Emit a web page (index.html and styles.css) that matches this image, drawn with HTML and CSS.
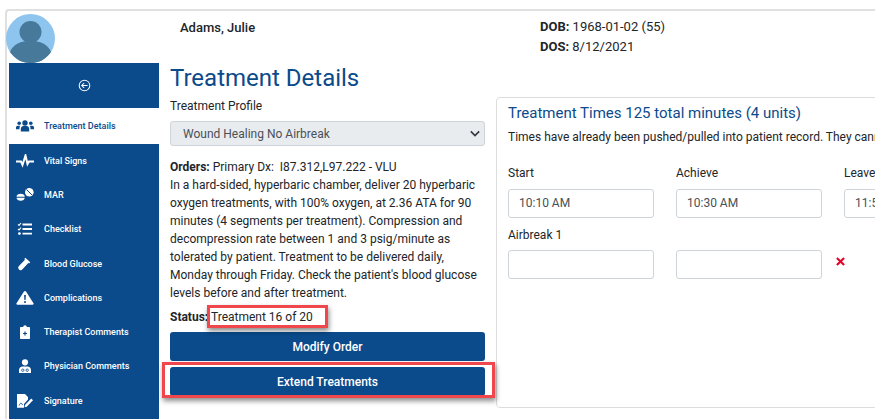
FILE: index.html
```html
<!DOCTYPE html>
<html>
<head>
  <meta charset="utf-8">
  <title>Treatment Details</title>
  <link rel="stylesheet" href="styles.css">
</head>
<body>
  <div class="page">
    <aside class="side">
      <div class="avatar">
        <svg viewBox="0 0 49 49" width="49" height="49">
          <circle cx="24.5" cy="24.5" r="24.5" fill="#8ec5ee"/>
          <circle cx="24.5" cy="18" r="11" fill="#47799b"/>
          <path d="M4 38c3-8 11-11 20.5-11S42 30 45 38a24.500 24.500 0 0 1-41 0z" fill="#47799b"/>
        </svg>
      </div>
      <nav class="nav">
        <div class="nav-toggle">
          <svg viewBox="0 0 14 14" width="13" height="13" fill="none" stroke="#fff" stroke-width="1.100">
            <circle cx="7" cy="7" r="5.700"/>
            <path d="M10.300 7H4.200M6.600 4.400L4 7l2.600 2.600"/>
          </svg>
        </div>
        <a class="nav-item active">
          <svg class="nav-icon" viewBox="0 0 18 14" width="18" height="14" fill="#0b4a8b">
            <circle cx="9" cy="4" r="2.700"/>
            <circle cx="3.200" cy="4.300" r="1.800"/>
            <circle cx="14.800" cy="4.300" r="1.800"/>
            <path d="M4.800 12.500V10c0-1.800 1.300-2.900 2.700-2.900h3c1.400 0 2.700 1.100 2.700 2.900v2.500z"/>
            <path d="M0 10.200V8.500c0-1 .8-1.800 1.800-1.800h2.300C3.600 7.500 3.500 8.700 3.500 10.200zM18 10.200V8.500c0-1-.8-1.800-1.800-1.800h-2.300c.5.800.6 2 .6 3.500z"/>
          </svg>
          <span>Treatment Details</span>
        </a>
        <a class="nav-item">
          <svg class="nav-icon" viewBox="0 0 18 14" width="18" height="14" fill="none" stroke="#fff" stroke-width="2">
            <path d="M0 7.500h5l1.500 3.500L9.500 1.500l2 8.500 1.500-2.500h5"/>
          </svg>
          <span>Vital Signs</span>
        </a>
        <a class="nav-item">
          <svg class="nav-icon" viewBox="0 0 18 14" width="18" height="14" fill="#fff">
            <path d="M0.500 8.700a4.200 3.400 0 0 1 8.300 0z"/>
            <path d="M0.500 9.800h8.300a4.200 3.600 0 0 1-8.300 0z"/>
            <circle cx="13.300" cy="4.300" r="4.300"/>
            <path d="M10.500 1.500l5.600 5.600" stroke="#0b4a8b" stroke-width="1"/>
          </svg>
          <span>MAR</span>
        </a>
        <a class="nav-item">
          <svg class="nav-icon" viewBox="0 0 18 14" width="18" height="14" fill="#fff">
            <path d="M6.500 1.500H16v1.900H6.500zM6.500 6.100H16V8H6.500zM6.500 10.700H16v1.900H6.500z"/>
            <path d="M2 2.400l1 1 2-2.400" fill="none" stroke="#fff" stroke-width="1.100"/>
            <path d="M2 7l1 1 2-2.400" fill="none" stroke="#fff" stroke-width="1.100"/>
            <circle cx="3.400" cy="11.600" r="1.400"/>
          </svg>
          <span>Checklist</span>
        </a>
        <a class="nav-item">
          <svg class="nav-icon" viewBox="0 0 18 14" width="18" height="14" fill="none" stroke="#fff">
            <path d="M5 12.600a1.900 1.900 0 0 1-1.800-3L9.500 3l2.600 2.400-6 6.300z" fill="#fff" stroke-width="1.200"/>
            <path d="M8.800 1.300l4.900 4.500" stroke-width="1.600"/>
          </svg>
          <span>Blood Glucose</span>
        </a>
        <a class="nav-item">
          <svg class="nav-icon" viewBox="0 0 18 14" width="18" height="14">
            <path d="M9 0c.5 0 .9.200 1.200.7l7.300 11.600c.4.700 0 1.500-.9 1.500H1.400c-.9 0-1.300-.8-.9-1.500L7.800.7C8.100.2 8.500 0 9 0z" fill="#fff"/>
            <path d="M8.100 4h1.800l-.3 5H8.400z" fill="#0b4a8b"/>
            <circle cx="9" cy="11" r="1" fill="#0b4a8b"/>
          </svg>
          <span>Complications</span>
        </a>
        <a class="nav-item">
          <svg class="nav-icon" viewBox="0 0 18 14" width="18" height="14">
            <path d="M5 2h2.200a1.800 1.800 0 0 1 3.600 0H13c.6 0 1 .4 1 1v10c0 .6-.4 1-1 1H5c-.6 0-1-.4-1-1V3c0-.6.4-1 1-1z" fill="#fff"/>
            <path d="M9 6.500v4M7 8.500h4" stroke="#0b4a8b" stroke-width="1.200"/>
          </svg>
          <span>Therapist Comments</span>
        </a>
        <a class="nav-item">
          <svg class="nav-icon" viewBox="0 0 18 14" width="18" height="14" fill="#fff">
            <circle cx="9" cy="3.300" r="3.100"/>
            <path d="M3 14v-3c0-2 1.500-3.600 3.600-3.600h4.800c2.100 0 3.600 1.600 3.600 3.600v3z"/>
            <circle cx="6.800" cy="11.200" r="1.200" fill="none" stroke="#0b4a8b" stroke-width=".8"/>
            <circle cx="11.200" cy="11.200" r="1.200" fill="none" stroke="#0b4a8b" stroke-width=".8"/>
          </svg>
          <span>Physician Comments</span>
        </a>
        <a class="nav-item">
          <svg class="nav-icon" viewBox="0 0 18 14" width="18" height="14" fill="#fff">
            <path d="M1 0h8l3 3v2.500L8 10v3.800H1z"/>
            <path d="M3 11.500c1-2 2-3 2.500-2s.5 1.500 1.500.5" fill="none" stroke="#0b4a8b" stroke-width=".9"/>
            <path d="M9 11l6.200-6.500 1.800 1.700-6.200 6.500-2.300.6z"/>
          </svg>
          <span>Signature</span>
        </a>
      </nav>
    </aside>

    <main class="main">
      <header class="patient">
        <div class="patient-name">Adams, Julie</div>
        <div class="patient-dates">
          <div><b>DOB:</b> 1968-01-02 (55)</div>
          <div><b>DOS:</b> 8/12/2021</div>
        </div>
      </header>

      <div class="content">
        <section class="details">
          <h1>Treatment Details</h1>
          <label class="field-label">Treatment Profile</label>
          <div class="select">
            <span>Wound Healing No Airbreak</span>
            <svg viewBox="0 0 12 8" width="10" height="7" fill="none" stroke="#343a40" stroke-width="2">
              <path d="M1 1.500l5 5 5-5"/>
            </svg>
          </div>
          <p class="orders"><b>Orders:</b> Primary Dx:&nbsp; I87.312,L97.222 - VLU<br>In a hard-sided, hyperbaric chamber, deliver 20 hyperbaric oxygen treatments, with 100% oxygen, at 2.36 ATA for 90 minutes (4 segments per treatment). Compression and decompression rate between 1 and 3 psig/minute as tolerated by patient. Treatment to be delivered daily, Monday through Friday. Check the patient's blood glucose levels before and after treatment.</p>
          <p class="status"><b>Status:</b> <span class="callout-inline">Treatment 16 of 20</span></p>
          <button class="btn">Modify Order</button>
          <div class="callout-block">
            <button class="btn">Extend Treatments</button>
          </div>
        </section>

        <section class="card">
          <h2>Treatment Times 125 total minutes (4 units)</h2>
          <p class="card-note">Times have already been pushed/pulled into patient record. They cannot be changed here.</p>
          <div class="times">
            <div class="time-col">
              <label class="field-label">Start</label>
              <div class="input">10:10 AM</div>
            </div>
            <div class="time-col">
              <label class="field-label">Achieve</label>
              <div class="input">10:30 AM</div>
            </div>
            <div class="time-col">
              <label class="field-label">Leave</label>
              <div class="input">11:55 AM</div>
            </div>
          </div>
          <label class="field-label airbreak-label">Airbreak 1</label>
          <div class="times">
            <div class="time-col"><div class="input"></div></div>
            <div class="time-col"><div class="input"></div></div>
            <svg class="remove" viewBox="0 0 10 10" width="9" height="9" stroke="#e2062c" stroke-width="2.400">
              <path d="M1 1l8 8M9 1l-8 8"/>
            </svg>
          </div>
        </section>
      </div>
    </main>
  </div>
</body>
</html>
```

FILE: styles.css
```css
html, body {
  margin: 0;
  height: 100%;
  overflow: hidden;
  background: white;
}
body {
  font-family: Roboto, "Liberation Sans", sans-serif;
  font-size: 12px;
  color: #212529;
}
.page {
  display: flex;
  height: 410px;
  margin: 9px 0 0 5px;
  border-top: 2px solid #e0e0e0;
  border-left: 2px solid #e0e0e0;
  border-top-left-radius: 4px;
}
.side {
  flex: none;
  width: 152px;
  padding-top: 3px;
}
.avatar {
  height: 49px;
  margin-left: -1px;
}
.avatar svg {
  display: block;
}
.nav {
  margin-left: 2px;
  width: 150px;
  height: 356px;
  background: #0b4a8b;
}
.nav-toggle {
  display: flex;
  align-items: center;
  justify-content: center;
  height: 45px;
}
.nav-item {
  display: flex;
  align-items: center;
  gap: 10px;
  height: 34.3px;
  padding-left: 7px;
  color: white;
  font-size: 9px;
  font-weight: 500;
}
.nav-item.active {
  height: 35.5px;
  background: white;
  color: #0b4a8b;
}
.nav-icon {
  flex: none;
}
.main {
  flex: none;
  width: 716px;
  padding-left: 11px;
  box-sizing: border-box;
}
.patient {
  display: flex;
  height: 52px;
  padding-top: 6px;
  box-sizing: border-box;
  font-size: 13px;
  line-height: 20px;
}
.patient-name {
  width: 370px;
  padding: 1px 0 0 10px;
  box-sizing: border-box;
  font-weight: 500;
}
.content {
  display: flex;
}
.details {
  flex: none;
  width: 315px;
}
h1 {
  margin: 0;
  font-size: 24px;
  font-weight: 400;
  line-height: 30px;
  color: #0b4a8b;
}
.field-label {
  display: block;
  line-height: 18px;
}
.details .field-label {
  margin-top: 4px;
}
.select {
  display: flex;
  align-items: center;
  justify-content: space-between;
  height: 25px;
  margin-top: 6px;
  padding: 0 4px 0 12px;
  background: #e9ecef;
  border: 1px solid #ced4da;
  border-radius: 3px;
  color: #495057;
  box-sizing: border-box;
}
.orders {
  margin: 12px 0 0;
  line-height: 18px;
}
.status {
  margin: 6px 0 0;
  line-height: 18px;
}
b {
  font-weight: 700;
}
.callout-inline {
  position: relative;
}
.callout-inline::after {
  content: "";
  position: absolute;
  left: -4px;
  right: -15px;
  top: -5px;
  bottom: -4px;
  border: 3px solid #f0474c;
  box-shadow: 1px 3px 5px rgba(0,0,0,0.45);
}
.btn {
  display: block;
  width: 100%;
  height: 29px;
  border: none;
  border-radius: 3px;
  background: #0b4a8b;
  color: white;
  font-family: inherit;
  font-size: 12px;
  font-weight: 500;
}
.status + .btn {
  margin-top: 6px;
}
.callout-block {
  position: relative;
  margin-top: 6px;
}
.callout-block::after {
  content: "";
  position: absolute;
  left: -8px;
  right: -10px;
  top: -5px;
  bottom: -2px;
  border: 3px solid #f0474c;
  box-shadow: 1px 3px 5px rgba(0,0,0,0.45);
}
.card {
  flex: none;
  width: 500px;
  height: 311px;
  margin: 34px 0 0 11px;
  padding: 5px 11px;
  border: 1px solid #ddd;
  border-radius: 4px;
  box-sizing: border-box;
}
h2 {
  margin: 0;
  font-size: 15px;
  font-weight: 400;
  line-height: 20px;
  color: #0b4a8b;
}
.card-note {
  margin: 5px 0 0;
  line-height: 18px;
  white-space: nowrap;
}
.times {
  display: flex;
  align-items: center;
  gap: 22px;
}
.card-note + .times {
  margin-top: 18px;
}
.time-col {
  flex: none;
  width: 146px;
}
.time-col .field-label {
  margin-bottom: 7px;
}
.input {
  height: 29px;
  padding: 0 10px;
  border: 1px solid #ced4da;
  border-radius: 3px;
  box-sizing: border-box;
  line-height: 27px;
  color: #495057;
}
.airbreak-label {
  margin: 8px 0 6px;
}
.remove {
  margin: 0 0 6px -8px;
}
```
